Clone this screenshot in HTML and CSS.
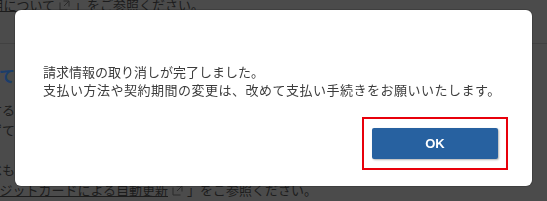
FILE: index.html
```html
<!DOCTYPE html>
<html lang="ja">
<head>
    <meta charset="UTF-8">
    <meta name="viewport" content="width=device-width, initial-scale=1.0">
    <title>請求情報の取り消し</title>
    <link rel="stylesheet" href="styles.css">
</head>
<body>
    <!-- page behind the dialog (dimmed) -->
    <div class="page">
        <div class="line top-note">
            <span class="cut cut-top"><a href="#">ご利用について</a></span>
            <span class="ext-icon"><svg width="11" height="11" viewBox="0 0 11 11"><path d="M1 2.5v7.5h7.5M4.5 1h5.5v5.5M10 1L5 6" fill="none" stroke="currentColor" stroke-width="1"/></svg></span>
            <span>」をご参照ください。</span>
        </div>
        <div class="rule"></div>
        <div class="line section-title">
            <span class="cut cut-edge">自動更新について</span>
        </div>
        <div class="para para-first">
            <div class="line"><span class="cut cut-edge">手続きをする</span></div>
            <div class="line"><span class="cut cut-edge">必ずて</span></div>
        </div>
        <div class="para para-second">
            <div class="line"><span class="cut cut-edge">詳しくは、下記もべも</span></div>
            <div class="line">
                <span class="cut cut-bottom"><a href="#">クレジットカードによる自動更新</a></span>
                <span class="ext-icon"><svg width="11" height="11" viewBox="0 0 11 11"><path d="M1 2.5v7.5h7.5M4.5 1h5.5v5.5M10 1L5 6" fill="none" stroke="currentColor" stroke-width="1"/></svg></span>
                <span>」をご参照ください。</span>
            </div>
        </div>
    </div>

    <div class="overlay">
        <div class="modal">
            <p class="modal-message">
                <span class="msg-line">請求情報の取り消しが完了しました。</span>
                <span class="msg-line msg-wide">支払い方法や契約期間の変更は、改めて支払い手続きをお願いいたします。</span>
            </p>
            <div class="modal-actions">
                <div class="highlight">
                    <button type="button" class="btn-ok">OK</button>
                </div>
            </div>
        </div>
    </div>
</body>
</html>
```

FILE: styles.css
```css
body {
    margin: 0;
    padding: 0;
    background-color: #4b4b4b;
    font-family: "Noto Sans CJK JP", "Noto Sans", sans-serif;
    font-size: 13px;
    color: #1c1c1c;
    overflow: hidden;
    height: 201px;
}
.page {
    line-height: 20px;
}
.line {
    display: flex;
    align-items: center;
    white-space: nowrap;
}
.line a {
    color: #1c1c1c;
    text-decoration: underline;
}
.cut {
    display: flex;
    justify-content: flex-end;
    overflow: hidden;
    flex: none;
}
.cut-edge {
    width: 15px;
}
.cut-top {
    width: 55px;
}
.cut-bottom {
    width: 168px;
}
.ext-icon {
    display: inline-flex;
    color: #2a2a2a;
    margin: 0 4px 0 4px;
}
.top-note {
    margin-top: -5px;
}
.rule {
    margin-top: 28px;
    border-top: 1px solid #414141;
}
.section-title {
    margin-top: 21px;
    font-size: 16px;
    font-weight: bold;
    color: #1b3d6a;
}
.para-first {
    margin-top: 15px;
}
.para-second {
    margin-top: 20px;
}

/* dialog */
.overlay {
    position: fixed;
    top: 0;
    left: 0;
    right: 0;
    bottom: 0;
    padding: 10px 0 0 15px;
}
.modal {
    width: 517px;
    height: 176px;
    box-sizing: border-box;
    background: #fff;
    border-radius: 6px;
    box-shadow: 0 0 0 1px rgba(0, 0, 0, 0.15);
    padding: 53px 24px 0 28px;
}
.modal-message {
    margin: 0;
    font-size: 13px;
    line-height: 18px;
    color: #3c3c3c;
}
.msg-line {
    display: block;
    white-space: nowrap;
}
.msg-wide {
    letter-spacing: 0.5px;
}
.modal-actions {
    display: flex;
    justify-content: flex-end;
    margin-top: 18px;
}
.highlight {
    border: 2px solid #e8000b;
    padding: 9px 8px;
}
.btn-ok {
    display: block;
    width: 126px;
    height: 31px;
    background-color: #2761a0;
    color: #fff;
    border: none;
    border-radius: 2px;
    box-shadow: 1px 1px 2px rgba(0, 0, 0, 0.3);
    font-family: "Liberation Sans", Arial, sans-serif;
    font-weight: bold;
    font-size: 13px;
    cursor: pointer;
}
```
